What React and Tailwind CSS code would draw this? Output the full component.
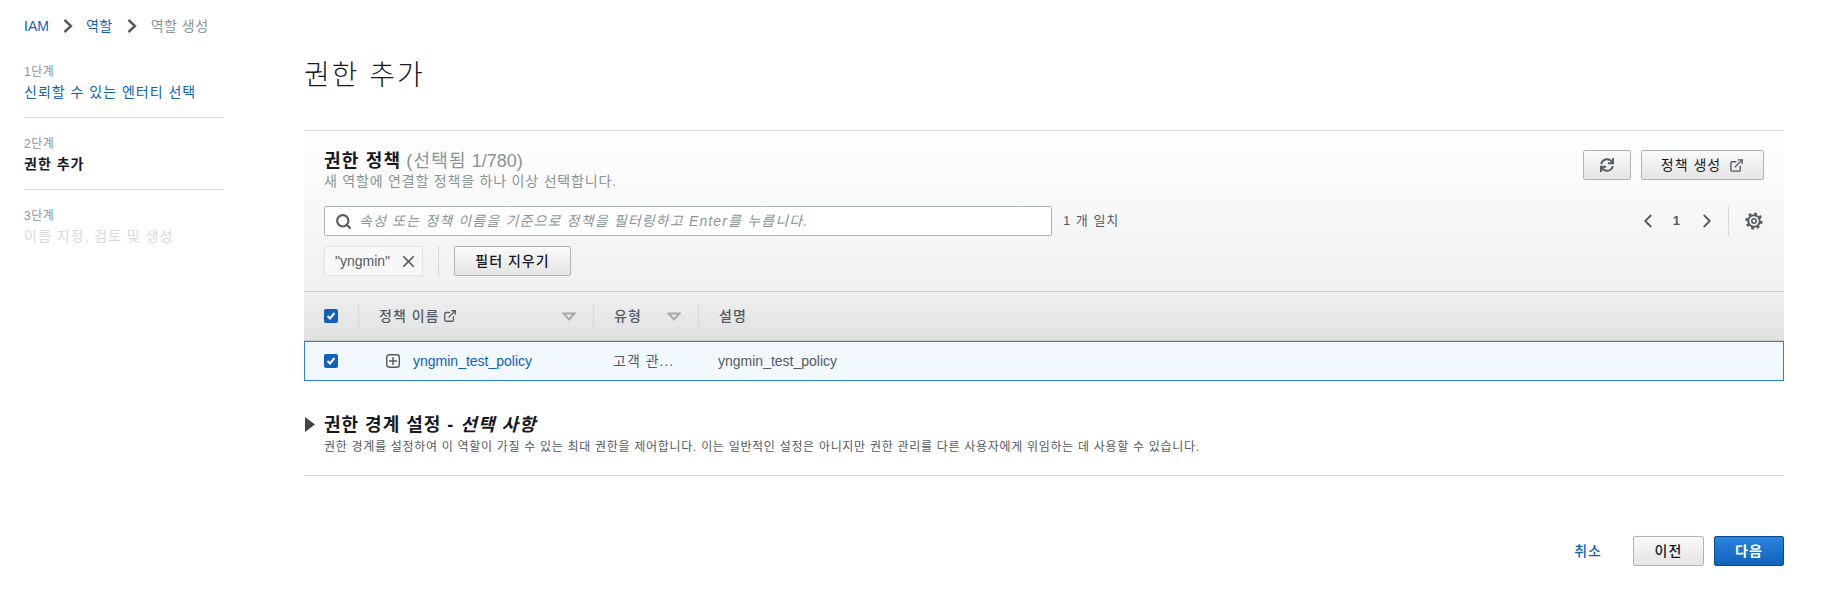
import { FaSync } from 'react-icons/fa';
import { LuExternalLink, LuSearch, LuX, LuChevronLeft, LuChevronRight } from 'react-icons/lu';

const font = { fontFamily: '"Liberation Sans", "Noto Sans CJK KR", sans-serif' };

const Chevron = () => (
  <svg width="12" height="16" viewBox="0 0 12 16" fill="none" stroke="#545b64" strokeWidth="2.4">
    <path d="M2.5 2l6.5 6-6.5 6" />
  </svg>
);

const Caret = () => (
  <svg width="14" height="9" viewBox="0 0 14 9" fill="none" stroke="#a4aaab" strokeWidth="2">
    <path d="M1.5 1.5h11L7 7.5z" />
  </svg>
);

const Gear = () => (
  <svg width="18" height="18" viewBox="0 0 18 18" fill="none" stroke="#545b64">
    <circle cx="9" cy="9" r="5.8" strokeWidth="2" />
    <circle cx="9" cy="9" r="2.2" strokeWidth="1.6" />
    <circle cx="9" cy="9" r="7.4" strokeWidth="2.4" strokeDasharray="2.8 3" />
  </svg>
);

const Check = () => (
  <span className="flex h-[14px] w-[14px] items-center justify-center rounded-[2px] bg-[#0f62b8]">
    <svg width="10" height="10" viewBox="0 0 10 10" fill="none" stroke="#fff" strokeWidth="2">
      <path d="M1.5 5l2.5 2.5 4.5-5.5" />
    </svg>
  </span>
);

const Btn = ({ className = '', children }) => (
  <button className={`flex h-[30px] items-center justify-center rounded-[2px] border border-[#aab7b8] bg-gradient-to-b from-[#fafafa] to-[#e4e4e4] text-[14px] tracking-[1px] text-[#16191f] ${className}`}>
    {children}
  </button>
);

const Step = ({ label, text, cls }) => (
  <div>
    <div className="text-[12px] leading-[16px] tracking-[0.5px] text-[#879596]">{label}</div>
    <div className={`mt-[2px] text-[14px] leading-[20px] tracking-[1px] ${cls}`}>{text}</div>
  </div>
);

const App = () => {
  return (
    <div style={font} className="h-[605px] w-[1821px] overflow-hidden bg-white text-[#16191f]">
      <nav className="flex h-[52px] items-center pl-[24px] text-[14px]">
        <span className="text-[#0f62b8]">IAM</span>
        <span className="ml-[13px] mr-[12px] flex"><Chevron /></span>
        <span className="tracking-[0.5px] text-[#0f62b8]">역할</span>
        <span className="mx-[13px] flex"><Chevron /></span>
        <span className="tracking-[0.5px] text-[#879596]">역할 생성</span>
      </nav>
      <div className="flex">
        <aside className="ml-[24px] mt-[12px] w-[200px]">
          <Step label="1단계" text="신뢰할 수 있는 엔터티 선택" cls="text-[#0f62b8]" />
          <div className="mb-[18px] mt-[15px] h-px bg-[#dfe1e3]" />
          <Step label="2단계" text="권한 추가" cls="font-bold text-[#16191f]" />
          <div className="mb-[18px] mt-[15px] h-px bg-[#dfe1e3]" />
          <Step label="3단계" text="이름 지정, 검토 및 생성" cls="text-[#d5dbdb]" />
        </aside>
        <main className="ml-[80px] w-[1480px]">
          <h1 className="mt-[2px] text-[28px] font-light leading-[44px] tracking-[2px] text-[#16191f]">권한 추가</h1>
          <section className="mt-[32px] border-t border-[#d5dbdb]">
            <div className="h-[160px] bg-gradient-to-b from-white to-[#f0f0f0] px-[20px] pt-[19px]">
              <div className="flex justify-between">
                <div>
                  <div className="text-[18px] leading-[22px]">
                    <span className="font-bold tracking-[1.2px]">권한 정책</span>{' '}
                    <span className="text-[#879596]"><span className="tracking-[1.2px]">(선택됨</span> 1/780)</span>
                  </div>
                  <div className="text-[14px] leading-[18px] tracking-[0.8px] text-[#879596]">새 역할에 연결할 정책을 하나 이상 선택합니다.</div>
                </div>
                <div className="flex gap-[10px]">
                  <Btn className="w-[48px]"><FaSync size={14} className="text-[#545b64]" /></Btn>
                  <Btn className="w-[123px] gap-[8px]">정책 생성 <LuExternalLink size={15} strokeWidth={2.2} className="text-[#545b64]" /></Btn>
                </div>
              </div>
              <div className="mt-[16px] flex items-center">
                <div className="flex h-[30px] w-[728px] items-center rounded-[2px] border border-[#aab7b8] bg-white pl-[10px]">
                  <LuSearch size={17} strokeWidth={3} className="text-[#545b64]" />
                  <span className="ml-[7px] text-[14px] italic tracking-[1.15px] text-[#879596]">속성 또는 정책 이름을 기준으로 정책을 필터링하고 Enter를 누릅니다.</span>
                </div>
                <span className="ml-[11px] text-[13px] tracking-[1px] text-[#545b64]">1 개 일치</span>
                <div className="ml-auto mr-[1px] flex items-center">
                  <LuChevronLeft size={22} className="text-[#545b64]" />
                  <span className="ml-[14px] mr-[16px] text-[13px] font-bold text-[#545b64]">1</span>
                  <LuChevronRight size={22} className="text-[#545b64]" />
                  <span className="ml-[10px] mr-[16px] h-[30px] w-px bg-[#d5dbdb]" />
                  <Gear />
                </div>
              </div>
              <div className="mt-[10px] flex items-center">
                <span className="flex h-[30px] w-[99px] items-center gap-[9px] rounded-[2px] border border-[#e1e4e5] bg-[#f8f8f8] pl-[10px] text-[14px] text-[#545b64]">
                  "yngmin" <LuX size={19} strokeWidth={2.2} />
                </span>
                <span className="mx-[15px] h-[30px] w-px bg-[#d5dbdb]" />
                <Btn className="w-[117px] font-medium">필터 지우기</Btn>
              </div>
            </div>
            <div className="flex h-[50px] items-center border-y border-[#c9cccc] bg-gradient-to-b from-[#f0f0f0] to-[#e0e0e0] text-[14px] font-medium tracking-[1px] text-[#545b64]">
              <div className="ml-[20px] flex w-[34px]"><Check /></div>
              <span className="h-[24px] w-px bg-[#d5dbdb]" />
              <div className="ml-[20px] flex w-[214px] items-center justify-between pr-[17px]">
                <span className="flex items-center gap-[4px]">정책 이름 <LuExternalLink size={14} strokeWidth={2.2} /></span>
                <Caret />
              </div>
              <span className="h-[24px] w-px bg-[#d5dbdb]" />
              <div className="ml-[20px] flex w-[84px] items-center justify-between pr-[17px]">
                <span>유형</span>
                <Caret />
              </div>
              <span className="h-[24px] w-px bg-[#d5dbdb]" />
              <div className="ml-[20px]">설명</div>
            </div>
            <div className="flex h-[40px] items-center border border-[#2a7fd5] bg-[#f1f8fe] text-[14px] text-[#16191f]">
              <div className="ml-[19px] flex w-[62px]"><Check /></div>
              <svg width="14" height="14" viewBox="0 0 14 14" fill="none" stroke="#545b64" strokeWidth="1.4">
                <rect x="0.7" y="0.7" width="12.6" height="12.6" rx="2.5" />
                <path d="M3 7h8M7 3v8" />
              </svg>
              <span className="ml-[13px] w-[200px] text-[#0f62b8]">yngmin_test_policy</span>
              <span className="w-[105px] tracking-[1px] text-[#545b64]">고객 관...</span>
              <span className="text-[#545b64]">yngmin_test_policy</span>
            </div>
          </section>
          <section className="mt-[31px] h-[64px] border-b border-[#d5dbdb]">
            <div className="flex items-center">
              <svg width="10" height="15" viewBox="0 0 10 15" className="ml-[1px] mr-[9px]"><path d="M0 0l10 7.5-10 7.5z" fill="#444" /></svg>
              <span className="mt-[1px] text-[18px] font-bold leading-[24px] tracking-[1px]">권한 경계 설정 - <i>선택 사항</i></span>
            </div>
            <p className="ml-[20px] mt-[2px] text-[12px] leading-[16px] tracking-[0.7px] text-[#545b64]">권한 경계를 설정하여 이 역할이 가질 수 있는 최대 권한을 제어합니다. 이는 일반적인 설정은 아니지만 권한 관리를 다른 사용자에게 위임하는 데 사용할 수 있습니다.</p>
          </section>
          <div className="mt-[60px] flex items-center justify-end">
            <span className="mr-[31px] text-[14px] font-medium tracking-[1px] text-[#0f62b8]">취소</span>
            <Btn className="w-[71px] font-medium">이전</Btn>
            <button className="ml-[10px] h-[30px] w-[70px] rounded-[2px] border border-[#0a4a8f] bg-gradient-to-b from-[#2a84de] to-[#0f62b8] text-[14px] font-bold tracking-[1px] text-white">다음</button>
          </div>
        </main>
      </div>
    </div>
  );
};

export default App;
